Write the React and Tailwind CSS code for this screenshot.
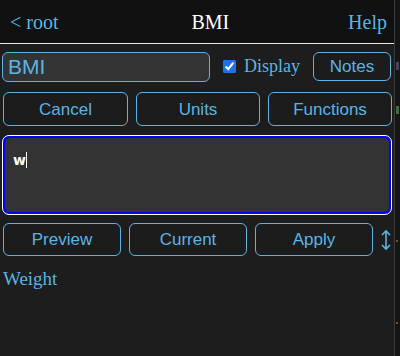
import React from "react";

const serif = { fontFamily: '"Liberation Serif", "Times New Roman", serif' };
const sans = { fontFamily: '"Liberation Sans", Arial, sans-serif' };

const Btn = ({ children, className = "" }) => (
  <button
    style={sans}
    className={`border border-[#5ab4e4] rounded-[6px] bg-[#1c1c1c] text-[#5ab4e4] text-[17px] leading-none flex items-center justify-center ${className}`}
  >
    {children}
  </button>
);

export default function App() {
  return (
    <div className="w-[400px] h-[356px] bg-[#1d1d1d] flex overflow-hidden">
      <div className="w-[394px] flex flex-col">
        {/* header */}
        <div className="h-[44px] bg-[#111111] flex items-center justify-between px-[10px] border-b border-[#e6e6e6]" style={serif}>
          <span className="text-[#5ab4e4] text-[20px]">&lt; root</span>
          <span className="text-white text-[20px] ml-[14px]">BMI</span>
          <span className="text-[#5ab4e4] text-[20px] mr-[-3px]">Help</span>
        </div>

        {/* name row */}
        <div className="flex items-center mt-[7px] pl-[2px] h-[31px]">
          <div
            style={sans}
            className="w-[208px] h-[30px] border border-[#5ab4e4] rounded-[6px] bg-[#333333] text-[#5ab4e4] text-[21px] flex items-center pl-[5px]"
          >
            BMI
          </div>
          <input type="checkbox" defaultChecked className="ml-[13px] w-[13px] h-[13px] accent-[#1a73e8]" />
          <span style={serif} className="ml-[8px] text-[#5ab4e4] text-[18px]">Display</span>
          <Btn className="ml-[13px] w-[78px] h-[29px]">Notes</Btn>
        </div>

        {/* actions row */}
        <div className="flex gap-[8px] mt-[10px] pl-[3px]">
          <Btn className="w-[125px] h-[34px]">Cancel</Btn>
          <Btn className="w-[124px] h-[34px]">Units</Btn>
          <Btn className="w-[124px] h-[34px]">Functions</Btn>
        </div>

        {/* editor */}
        <div className="mt-[9px] ml-[2px] w-[390px] h-[80px] rounded-[7px] border border-white p-[2px] bg-[#0000ff]">
          <div className="w-full h-full rounded-[5px] bg-[#333333] px-[8px] pt-[9px]">
            <span className="text-white text-[14px] font-bold leading-none" style={{ fontFamily: '"DejaVu Sans", sans-serif' }}>
              w<span className="inline-block w-[1px] h-[16px] bg-white align-[-3px]" />
            </span>
          </div>
        </div>

        {/* bottom row */}
        <div className="flex items-center gap-[8px] mt-[8px] pl-[3px]">
          <Btn className="w-[118px] h-[33px]">Preview</Btn>
          <Btn className="w-[118px] h-[33px]">Current</Btn>
          <Btn className="w-[118px] h-[33px]">Apply</Btn>
          <svg width="12" height="22" viewBox="0 0 12 22" className="ml-[-1px]">
            <path d="M6 2v18M2 6l4-4 4 4M2 16l4 4 4-4" stroke="#5ab4e4" strokeWidth="1.6" fill="none" />
          </svg>
        </div>

        <div style={serif} className="mt-[9px] pl-[3px] text-[#5ab4e4] text-[19px]">Weight</div>
      </div>

      {/* side strip */}
      <div className="w-[6px] bg-[#151515] border-l border-[#3a3a3a] relative">
        <span className="absolute top-[62px] left-[1px] w-[3px] h-[8px] bg-[#4a4060]" />
        <span className="absolute top-[106px] left-[1px] w-[3px] h-[8px] bg-[#3f6b3f]" />
        <span className="absolute top-[240px] left-[1px] w-[2px] h-[2px] bg-[#7a5030]" />
        <span className="absolute top-[322px] left-[1px] w-[2px] h-[2px] bg-[#7a5030]" />
      </div>
    </div>
  );
}
